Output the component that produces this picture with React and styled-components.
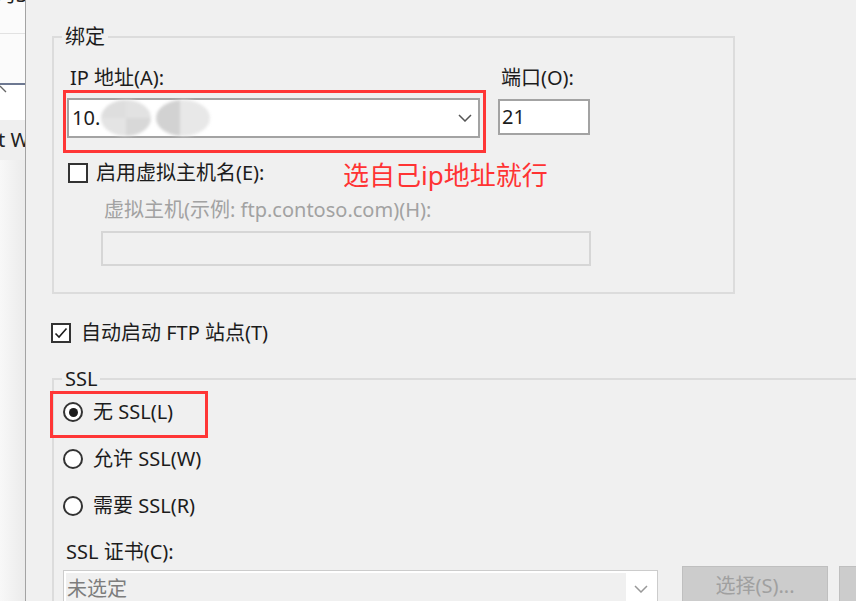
import React from 'react';
import styled, { createGlobalStyle } from 'styled-components';

const FONT = `"Noto Sans", "Noto Sans CJK SC", sans-serif`;

const Global = createGlobalStyle`
  html, body { margin: 0; padding: 0; overflow: hidden; background: #f0f0f0; }
  #root { width: 856px; height: 601px; overflow: hidden; }
  * { box-sizing: border-box; }
`;

const Screen = styled.div`
  display: flex;
  width: 856px;
  height: 601px;
  overflow: hidden;
  font-family: ${FONT};
  font-size: 20px;
  line-height: 24px;
  color: #1c1c1c;
  background: #f0f0f0;
`;

/* ---------- left navigation strip (cut off) ---------- */
const SidePanel = styled.aside`
  width: 26px;
  flex: none;
  border-right: 1px solid #a3a3a3;
  display: flex;
  flex-direction: column;
  overflow: hidden;
  background: linear-gradient(to right, #f8f8f8, #ebebeb);
`;

const SideTab = styled.div`
  height: ${p => p.$h}px;
  flex: none;
  background: ${p => p.$bg || '#fbfbfb'};
  border-bottom: ${p => p.$rule || 'none'};
  overflow: hidden;
  white-space: nowrap;
  position: relative;
`;

const SideText = styled.span`
  display: block;
  margin-top: ${p => p.$top}px;
  margin-left: ${p => p.$left}px;
  color: #222;
`;

const SideChevron = styled.svg`
  display: block;
  margin-top: 0;
`;

/* ---------- main area ---------- */
const Main = styled.main`
  flex: 1;
  min-width: 0;
  padding: 36px 0 0 26px;
  display: flex;
  flex-direction: column;
`;

const GroupBox = styled.section`
  position: relative;
  flex: none;
  width: ${p => (p.$width ? `${p.$width}px` : 'auto')};
  border: 2px solid #dcdcdc;
  ${p => p.$open && 'border-right: none; border-bottom: none; flex: 1;'}
  padding: ${p => p.$pad};
  margin-top: ${p => p.$mt || 0}px;
`;

const Legend = styled.span`
  position: absolute;
  top: -13px;
  left: 8px;
  padding: 0 3px;
  background: #f0f0f0;
  line-height: 24px;
`;

const BindRow = styled.div`
  display: flex;
  align-items: flex-start;
  gap: 18px;
`;

const FieldCol = styled.div`
  display: flex;
  flex-direction: column;
  gap: 8px;
`;

const FieldLabel = styled.label`
  padding-left: ${p => p.$indent || 0}px;
  color: ${p => (p.$disabled ? '#a2a2a2' : '#1c1c1c')};
  white-space: nowrap;
`;

const ComboWrap = styled.div`
  position: relative;
  &::after {
    content: '';
    position: absolute;
    top: -8px;
    left: -4px;
    right: -6px;
    bottom: -15px;
    border: 3px solid #ff3636;
    pointer-events: none;
  }
`;

const Note = styled.span`
  position: absolute;
  left: 276px;
  top: 62px;
  font-size: 26px;
  line-height: 30px;
  color: #ff3333;
  white-space: nowrap;
`;

const Combo = styled.div`
  width: 413px;
  height: 40px;
  border: 2px solid #a3a3a3;
  background: #fff;
  display: flex;
  align-items: center;
  padding: 0 6px 0 3px;
  white-space: nowrap;
`;

const ComboText = styled.span`
  flex: 1;
  display: flex;
  align-items: center;
  min-width: 0;
`;

const Mosaic = styled.span`
  display: inline-block;
  flex: none;
  width: ${p => p.$w}px;
  height: 36px;
  margin-left: ${p => p.$ml}px;
  border-radius: 50%;
  background: ${p => p.$bg};
  filter: blur(1.5px);
`;

const TextInput = styled.div`
  width: ${p => p.$w}px;
  height: ${p => p.$h}px;
  margin-top: ${p => p.$mt || 0}px;
  border: 2px solid ${p => (p.$disabled ? '#d6d6d6' : '#a3a3a3')};
  background: ${p => (p.$disabled ? '#f0f0f0' : '#fff')};
  padding-left: 2px;
  display: flex;
  align-items: center;
`;

const CheckRow = styled.div`
  display: flex;
  align-items: center;
  gap: ${p => p.$gap}px;
  margin-top: ${p => p.$mt}px;
  margin-left: ${p => p.$ml || 0}px;
  height: 24px;
`;

const CheckBox = styled.span`
  width: 20px;
  height: 20px;
  flex: none;
  border: 2px solid #333;
  background: #fff;
  display: grid;
  place-items: center;
  margin-left: ${p => p.$ml || 0}px;
`;

const SubField = styled.div`
  padding-left: 34px;
  margin-top: 13px;
  display: flex;
  flex-direction: column;
`;

const RadioList = styled.div`
  display: flex;
  flex-direction: column;
  gap: 23px;
`;

const RadioRow = styled.div`
  position: relative;
  display: flex;
  align-items: center;
  gap: 10px;
  height: 24px;
  white-space: nowrap;
  ${p =>
    p.$marked &&
    `&::after {
      content: '';
      position: absolute;
      left: -13px;
      top: -9px;
      width: 152px;
      height: 41px;
      border: 3px solid #ff3636;
      pointer-events: none;
    }`}
`;

const Radio = styled.span`
  width: 20px;
  height: 20px;
  flex: none;
  border: 2px solid #333;
  border-radius: 50%;
  background: #fff;
  display: grid;
  place-items: center;
  &::before {
    content: '';
    width: 9px;
    height: 9px;
    border-radius: 50%;
    background: ${p => (p.$on ? '#1c1c1c' : 'transparent')};
  }
`;

const CertLabel = styled.div`
  margin-top: 22px;
  padding-left: 3px;
  white-space: nowrap;
`;

const CertRow = styled.div`
  display: flex;
  align-items: flex-start;
  gap: 24px;
  margin-top: 6px;
`;

const CertCombo = styled.div`
  width: 595px;
  height: 38px;
  flex: none;
  border: 1px solid #cccccc;
  background: #fff;
  padding: 2px;
  display: flex;
`;

const CertField = styled.span`
  flex: 1;
  background: #f0f0f0;
  color: #7d7d7d;
  padding-left: 1px;
  display: flex;
  align-items: center;
`;

const CertArrow = styled.span`
  width: 29px;
  flex: none;
  display: grid;
  place-items: center;
`;

const ButtonGroup = styled.div`
  display: flex;
  gap: 11px;
  margin-top: -4px;
  flex: none;
`;

const Button = styled.button`
  width: 146px;
  height: 40px;
  flex: none;
  border: 1px solid #bfbfbf;
  background: #cccccc;
  color: #a0a0a0;
  font-family: ${FONT};
  font-size: 20px;
  line-height: 24px;
  padding: 0;
`;

const Chevron = ({ color = '#555' }) => (
  <svg width="14" height="8" viewBox="0 0 14 8">
    <polyline points="1,1 7,7 13,1" fill="none" stroke={color} strokeWidth="1.5" />
  </svg>
);

const Check = () => (
  <svg width="16" height="16" viewBox="0 0 16 16">
    <path d="M2.5 8.5 L6 12 L13.5 3.5" fill="none" stroke="#1c1c1c" strokeWidth="1.6" />
  </svg>
);

export default function App() {
  return (
    <>
      <Global />
      <Screen>
        <SidePanel>
          <SideTab $h={34} $rule="1px solid #e2e2e2">
            <SideText $top={-17} $left={-4}>习3</SideText>
          </SideTab>
          <SideTab $h={51} $rule="2px solid #6d7891" />
          <SideTab $h={35} $bg="#ffffff">
            <SideChevron width="8" height="8" viewBox="0 0 8 8">
              <polyline points="0,1 6,7" fill="none" stroke="#666" strokeWidth="1.3" />
            </SideChevron>
          </SideTab>
          <SideTab $h={40} $bg="#efefef">
            <SideText $top={8} $left={-2}>t W</SideText>
          </SideTab>
        </SidePanel>

        <Main>
          <GroupBox $width={683} $pad="28px 0 26px 13px">
            <Legend>绑定</Legend>
            <BindRow>
              <FieldCol>
                <FieldLabel $indent={3}>IP 地址(A):</FieldLabel>
                <ComboWrap>
                  <Combo>
                    <ComboText>
                      10.
                      <Mosaic
                        $w={50}
                        $ml={1}
                        $bg="conic-gradient(from 0deg, #e2e2e2 0 25%, #d8d8d8 25% 50%, #e4e4e4 50% 75%, #dedede 75%)"
                      />
                      <Mosaic
                        $w={54}
                        $ml={5}
                        $bg="linear-gradient(to right, #d2d2d2 0 45%, #e8e8e8 45%)"
                      />
                    </ComboText>
                    <Chevron />
                  </Combo>
                  <Note>选自己ip地址就行</Note>
                </ComboWrap>
              </FieldCol>
              <FieldCol>
                <FieldLabel $indent={3}>端口(O):</FieldLabel>
                <TextInput $w={92} $h={36} $mt={1}>21</TextInput>
              </FieldCol>
            </BindRow>

            <CheckRow $gap={8} $mt={23}>
              <CheckBox $ml={1} />
              <span>启用虚拟主机名(E):</span>
            </CheckRow>

            <SubField>
              <FieldLabel $indent={3} $disabled>
                虚拟主机(示例: ftp.contoso.com)(H):
              </FieldLabel>
              <TextInput $w={490} $h={35} $mt={9} $disabled />
            </SubField>
          </GroupBox>

          <CheckRow $gap={10} $mt={27} $ml={-1}>
            <CheckBox>
              <Check />
            </CheckBox>
            <span>自动启动 FTP 站点(T)</span>
          </CheckRow>

          <GroupBox $open $mt={33} $pad="20px 0 0 9px">
            <Legend>SSL</Legend>
            <RadioList>
              <RadioRow $marked>
                <Radio $on />
                <span>无 SSL(L)</span>
              </RadioRow>
              <RadioRow>
                <Radio />
                <span>允许 SSL(W)</span>
              </RadioRow>
              <RadioRow>
                <Radio />
                <span>需要 SSL(R)</span>
              </RadioRow>
            </RadioList>

            <CertLabel>SSL 证书(C):</CertLabel>
            <CertRow>
              <CertCombo>
                <CertField>未选定</CertField>
                <CertArrow>
                  <Chevron color="#999" />
                </CertArrow>
              </CertCombo>
              <ButtonGroup>
                <Button disabled>选择(S)...</Button>
                <Button disabled>查看(V)...</Button>
              </ButtonGroup>
            </CertRow>
          </GroupBox>
        </Main>
      </Screen>
    </>
  );
}
